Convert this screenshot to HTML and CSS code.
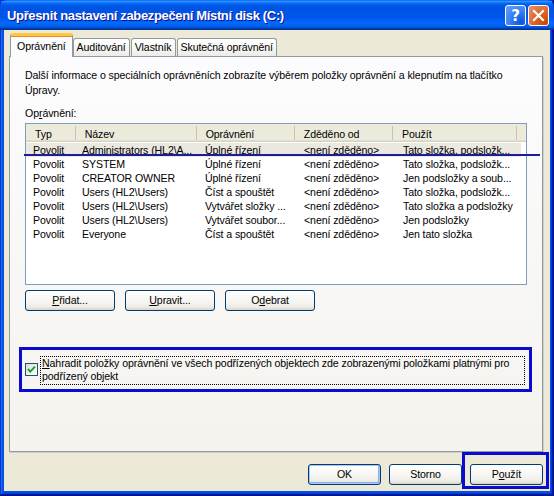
FILE: index.html
```html
<!DOCTYPE html>
<html lang="cs">
<head>
<meta charset="utf-8">
<title>Upřesnit nastavení zabezpečení</title>
<link rel="stylesheet" href="styles.css">
</head>
<body>
<div class="window">
  <div class="titlebar">
    <span class="title">Upřesnit nastavení zabezpečení Místní disk (C:)</span>
    <div class="tb-buttons">
      <div class="tb-btn help">?</div>
      <div class="tb-btn close">
        <svg width="13" height="13" viewBox="0 0 13 13"><path d="M2 2 L11 11 M11 2 L2 11" stroke="#fff" stroke-width="2.2" stroke-linecap="square"/></svg>
      </div>
    </div>
  </div>
  <div class="body">
    <div class="tabs">
      <div class="tab active">Oprávnění</div>
      <div class="tab">Auditování</div>
      <div class="tab">Vlastník</div>
      <div class="tab">Skutečná oprávnění</div>
    </div>
    <div class="panel">
      <p class="desc">Další informace o speciálních oprávněních zobrazíte výběrem položky oprávnění a klepnutím na tlačítko<br>Úpravy.</p>
      <div class="label">Op<u>r</u>ávnění:</div>
      <div class="list">
        <div class="row head">
          <div class="c c1">Typ</div><div class="c c2">Název</div><div class="c c3">Oprávnění</div><div class="c c4">Zděděno od</div><div class="c c5">Použít</div><div class="c fill"></div>
        </div>
        <div class="row sel">
          <div class="c c1">Povolit</div><div class="c c2">Administrators (HL2\A...</div><div class="c c3">Úplné řízení</div><div class="c c4">&lt;není zděděno&gt;</div><div class="c c5">Tato složka, podsložk...</div>
        </div>
        <div class="row">
          <div class="c c1">Povolit</div><div class="c c2">SYSTEM</div><div class="c c3">Úplné řízení</div><div class="c c4">&lt;není zděděno&gt;</div><div class="c c5">Tato složka, podsložk...</div>
        </div>
        <div class="row">
          <div class="c c1">Povolit</div><div class="c c2">CREATOR OWNER</div><div class="c c3">Úplné řízení</div><div class="c c4">&lt;není zděděno&gt;</div><div class="c c5">Jen podsložky a soub...</div>
        </div>
        <div class="row">
          <div class="c c1">Povolit</div><div class="c c2">Users (HL2\Users)</div><div class="c c3">Číst a spouštět</div><div class="c c4">&lt;není zděděno&gt;</div><div class="c c5">Tato složka, podsložk...</div>
        </div>
        <div class="row">
          <div class="c c1">Povolit</div><div class="c c2">Users (HL2\Users)</div><div class="c c3">Vytvářet složky ...</div><div class="c c4">&lt;není zděděno&gt;</div><div class="c c5">Tato složka a podsložky</div>
        </div>
        <div class="row">
          <div class="c c1">Povolit</div><div class="c c2">Users (HL2\Users)</div><div class="c c3">Vytvářet soubor...</div><div class="c c4">&lt;není zděděno&gt;</div><div class="c c5">Jen podsložky</div>
        </div>
        <div class="row">
          <div class="c c1">Povolit</div><div class="c c2">Everyone</div><div class="c c3">Číst a spouštět</div><div class="c c4">&lt;není zděděno&gt;</div><div class="c c5">Jen tato složka</div>
        </div>
      </div>
      <div class="btnrow">
        <div class="btn"><u>P</u>řidat...</div>
        <div class="btn"><u>U</u>pravit...</div>
        <div class="btn">O<u>d</u>ebrat</div>
      </div>
      <div class="check">
        <div class="box">
          <svg width="11" height="11" viewBox="0 0 11 11"><path d="M2 5 L4.3 7.6 L9 2.6" fill="none" stroke="#21A121" stroke-width="2"/></svg>
        </div>
        <div class="checklabel"><u>N</u>ahradit položky oprávnění ve všech podřízených objektech zde zobrazenými položkami platnými pro<br>podřízený objekt</div>
      </div>
    </div>
    <div class="footer">
      <div class="btn small default">OK</div>
      <div class="btn small">Storno</div>
      <div class="btn small">P<u>o</u>užít</div>
    </div>
  </div>
  <div class="annot line"></div>
  <div class="annot rect r1"></div>
  <div class="annot rect r2"></div>
</div>
</body>
</html>
```
FILE: styles.css
```css
html, body {
  margin: 0;
  padding: 0;
  background: #ffffff;
}
body {
  width: 554px;
  height: 496px;
  overflow: hidden;
  font-family: "Liberation Sans", Arial, sans-serif;
  font-size: 10.6px;
  letter-spacing: -0.1px;
  color: #000;
}
.window {
  position: relative;
  width: 554px;
  height: 496px;
  box-sizing: border-box;
  display: flex;
  flex-direction: column;
  background: #0850DC;
  box-shadow: inset -1px -1px #00138c, inset 1px 1px #0831d9, inset -2px -2px #001ea0, inset 2px 2px #166aee, inset -3px -3px #003bda, inset 3px 3px #0855dd;
}
.titlebar {
  height: 30px;
  flex: none;
  display: flex;
  align-items: center;
  justify-content: space-between;
  padding: 0 5px 0 7px;
  background: linear-gradient(to bottom, #0058ee 0%, #3593ff 4%, #288eff 6%, #127dff 8%, #036ffc 10%, #0262ee 14%, #0057e5 20%, #0054e3 24%, #0055eb 56%, #005bf5 66%, #026afe 76%, #0062ef 86%, #0052d6 92%, #0040ab 94%, #003092 100%);
  border-radius: 7px 7px 0 0;
}
.title {
  color: #fff;
  font-family: "Liberation Sans", Arial, sans-serif;
  font-weight: bold;
  font-size: 13px;
  letter-spacing: -0.35px;
  text-shadow: 1px 1px #0f1089;
  padding-top: 1px;
}
.tb-buttons {
  display: flex;
  gap: 2px;
  padding-top: 1px;
}
.tb-btn {
  width: 19px;
  height: 19px;
  border: 1px solid #fff;
  border-radius: 3px;
  display: flex;
  align-items: center;
  justify-content: center;
  color: #fff;
  font-family: "DejaVu Sans", sans-serif;
  font-weight: bold;
  font-size: 15px;
  letter-spacing: 0;
}
.help {
  background: radial-gradient(circle at 80% 85%, #0a55e0 0%, #3a80f3 50%, #5b9cfa 90%);
}
.close {
  background: radial-gradient(circle at 90% 90%, #cc4600 0%, #dc6527 50%, #e98a64 90%);
}
.body {
  flex: 1;
  margin: 0 4px 5px 4px;
  background: #ECE9D8;
  padding: 5px 7px 0 5px;
  display: flex;
  flex-direction: column;
}
.tabs {
  height: 21px;
  display: flex;
  align-items: flex-end;
  padding-left: 1px;
  position: relative;
  z-index: 2;
}
.tab {
  height: 17px;
  padding: 0 3px;
  border: 1px solid #919b9c;
  border-bottom: none;
  border-radius: 3px 3px 0 0;
  background: linear-gradient(to bottom, #fff 0%, #fafaf9 40%, #ecebe6 100%);
  line-height: 17px;
  margin-right: 1px;
}
.tab.active {
  height: 21px;
  margin-bottom: -1px;
  padding: 0 6px;
  background: #fcfcfe;
  border-top: 3px solid #ffc83c;
  box-shadow: inset 0 1px #e68b2c;
  line-height: 20px;
  margin-right: 0;
  border-radius: 3px 3px 0 0;
}
.panel {
  height: 396px;
  box-sizing: border-box;
  border: 1px solid #919b9c;
  background: linear-gradient(to bottom, #fcfcfe, #f4f3ee);
  box-shadow: 1px 1px 0 #d0cec0;
  padding: 11px 16px 0 15px;
  display: flex;
  flex-direction: column;
}
.desc {
  margin: 0;
  line-height: 15px;
}
.label {
  margin-top: 8px;
  line-height: 14px;
}
.list {
  margin-top: 3px;
  width: 502px;
  height: 162px;
  box-sizing: border-box;
  border: 1px solid #7f9db9;
  background: #fff;
  display: flex;
  flex-direction: column;
}
.row {
  display: flex;
  height: 14px;
  line-height: 14px;
  white-space: nowrap;
}
.row.head {
  height: 18px;
  line-height: 16px;
  background: #ebeadb;
  box-shadow: inset 0 -1px #d6d2c2, inset 0 -2px #e2decd;
  margin-bottom: 1px;
}
.row.sel {
  background: #ebe9df;
  width: 495px;
}
.c {
  overflow: hidden;
  padding-left: 7px;
  box-sizing: border-box;
}
.c1 { width: 50px; }
.c2 { width: 122px; padding-left: 6px; }
.c3 { width: 99px; }
.c4 { width: 99px; }
.c5 { width: 125px; }
.head .c {
  padding-left: 9px;
  border-right: 1px solid #c7c5b2;
  height: 14px;
  margin-top: 2px;
}
.head .fill {
  flex: 1;
  border-right: none;
}
.btnrow {
  margin-top: 5px;
  display: flex;
  gap: 10px;
}
.btn {
  width: 90px;
  height: 21px;
  box-sizing: border-box;
  border: 1px solid #003c74;
  border-radius: 3px;
  background: linear-gradient(to bottom, #ffffff 0%, #f5f4f0 60%, #ecebe4 85%, #d8d3c8 100%);
  display: flex;
  align-items: center;
  justify-content: center;
  line-height: 19px;
}
.check {
  margin-top: 45px;
  display: flex;
  align-items: flex-start;
}
.box {
  margin-top: 7px;
  width: 13px;
  height: 13px;
  box-sizing: border-box;
  border: 1px solid #1c5180;
  background: linear-gradient(135deg, #dcdcd7, #ffffff);
  display: flex;
  align-items: center;
  justify-content: center;
  flex: none;
}
.checklabel {
  margin-left: 2px;
  width: 485px;
  box-sizing: border-box;
  border: 1px dotted #000;
  padding: 0 0 1px 1px;
  line-height: 13px;
  white-space: nowrap;
}
.footer {
  margin-top: 12px;
  display: flex;
  justify-content: flex-end;
  gap: 8px;
}
.btn.small {
  width: 73px;
}
.btn.default {
  box-shadow: inset 0 0 0 1px #aac6f5, inset -1px -1px 0 1px #8cb0ec;
}
.annot {
  position: absolute;
  pointer-events: none;
}
.line {
  left: 24px;
  top: 154px;
  width: 516px;
  height: 2px;
  background: #1b1d9c;
}
.rect {
  border: 3px solid #0a0ad0;
  box-sizing: border-box;
}
.r1 {
  left: 19px;
  top: 347px;
  width: 513px;
  height: 45px;
}
.r2 {
  left: 462px;
  top: 452px;
  width: 87px;
  height: 37px;
}
```
